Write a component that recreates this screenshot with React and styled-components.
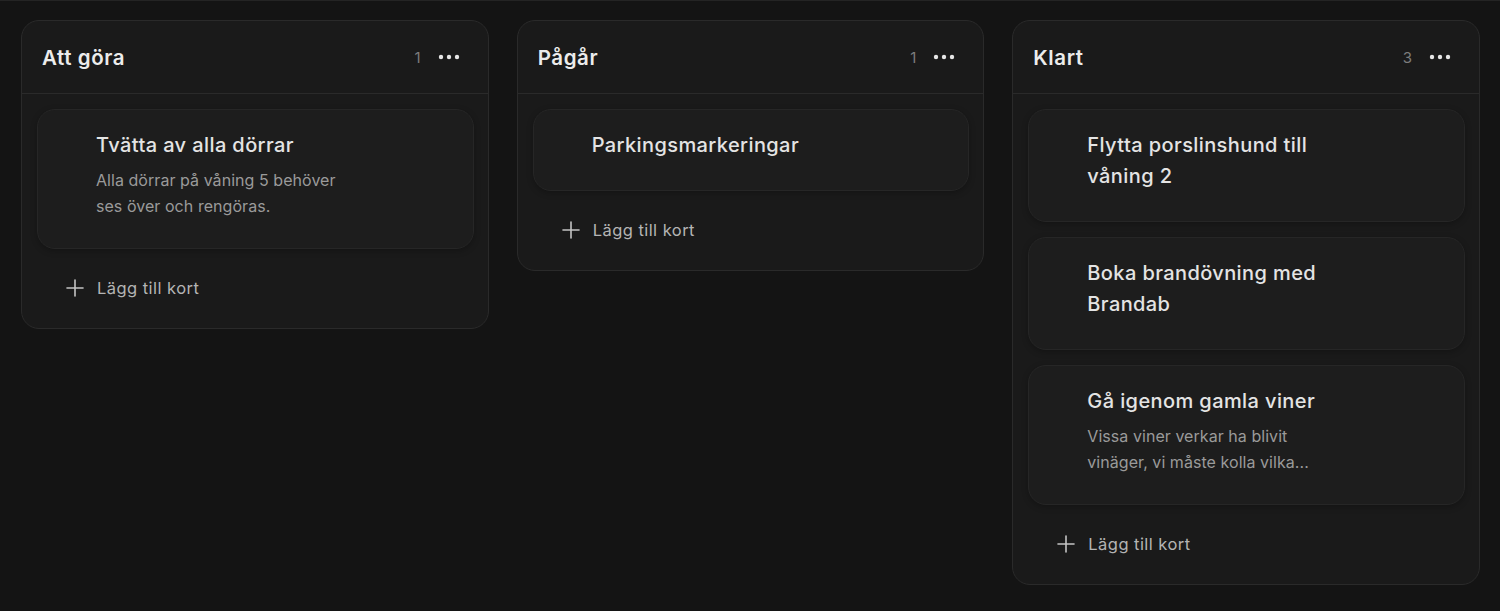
import styled, { createGlobalStyle } from 'styled-components';

const GlobalStyle = createGlobalStyle`
  html, body {
    margin: 0;
    padding: 0;
    background: #141414;
  }
  body {
    font-family: Inter, "Noto Sans", sans-serif;
    -webkit-font-smoothing: antialiased;
  }
`;

const columns = [
  {
    title: 'Att göra',
    cards: [
      {
        title: 'Tvätta av alla dörrar',
        text: 'Alla dörrar på våning 5 behöver ses över och rengöras.',
      },
    ],
  },
  {
    title: 'Pågår',
    cards: [{ title: 'Parkingsmarkeringar' }],
  },
  {
    title: 'Klart',
    cards: [
      { title: 'Flytta porslinshund till våning 2' },
      { title: 'Boka brandövning med Brandab' },
      {
        title: 'Gå igenom gamla viner',
        text: 'Vissa viner verkar ha blivit vinäger, vi måste kolla vilka...',
      },
    ],
  },
];

const Board = styled.div`
  border-top: 1px solid #242424;
  min-height: 610px;
  box-sizing: border-box;
  padding: 19px 20px 20px 21px;
  display: grid;
  grid-template-columns: repeat(3, 1fr);
  gap: 28px;
  align-items: start;
`;

const Column = styled.section`
  background: #1a1a1a;
  border: 1px solid #2a2a2a;
  border-radius: 18px;
  overflow: hidden;
`;

const Header = styled.header`
  height: 73px;
  box-sizing: border-box;
  display: flex;
  align-items: center;
  padding: 0 28px 0 20px;
  border-bottom: 1px solid #2a2a2a;
`;

const Title = styled.h2`
  margin: 0;
  flex: 1;
  font-size: 20.5px;
  font-weight: 600;
  color: #ececec;
  letter-spacing: 0.6px;
`;

const Count = styled.span`
  font-size: 15px;
  color: #7d7d7d;
  margin-right: 17px;
`;

const MenuButton = styled.button`
  border: 0;
  padding: 0;
  background: none;
  display: flex;
  color: #e6e6e6;
`;

const Body = styled.div`
  display: flex;
  flex-direction: column;
  gap: 15px;
  padding: 15px 14px 16px 15px;
`;

const Card = styled.article`
  background: #1d1d1d;
  border: 1px solid #262626;
  border-radius: 18px;
  padding: 20px 20px 29px 58px;
  box-shadow: 0 2px 6px rgba(0, 0, 0, 0.25);
`;

const CardTitle = styled.h3`
  margin: 0;
  max-width: 265px;
  font-size: 20px;
  line-height: 31px;
  font-weight: 500;
  letter-spacing: 0.4px;
  color: #e4e4e4;
`;

const CardText = styled.p`
  margin: 6px 0 0;
  max-width: 265px;
  font-size: 16px;
  line-height: 26px;
  letter-spacing: 0.05px;
  color: #9a9a9a;
`;

const AddButton = styled.button`
  height: 48px;
  border: 0;
  background: none;
  display: flex;
  align-items: center;
  gap: 13px;
  padding: 0 0 0 29px;
  font-family: inherit;
  font-size: 16.5px;
  letter-spacing: 0.45px;
  color: #b4b4b4;
  text-align: left;
`;

const Dots = () => (
  <svg width="22" height="22" viewBox="0 0 22 22" fill="currentColor">
    <circle cx="3" cy="11" r="2.2" />
    <circle cx="11" cy="11" r="2.2" />
    <circle cx="19" cy="11" r="2.2" />
  </svg>
);

const Plus = () => (
  <svg width="18" height="18" viewBox="0 0 18 18" stroke="#c4c4c4" strokeWidth="1.6" strokeLinecap="round">
    <line x1="9" y1="1" x2="9" y2="17" />
    <line x1="1" y1="9" x2="17" y2="9" />
  </svg>
);

export default function App() {
  return (
    <>
      <GlobalStyle />
      <Board>
        {columns.map((col) => (
          <Column key={col.title}>
            <Header>
              <Title>{col.title}</Title>
              <Count>{col.cards.length}</Count>
              <MenuButton>
                <Dots />
              </MenuButton>
            </Header>
            <Body>
              {col.cards.map((card) => (
                <Card key={card.title}>
                  <CardTitle>{card.title}</CardTitle>
                  {card.text && <CardText>{card.text}</CardText>}
                </Card>
              ))}
              <AddButton>
                <Plus />
                Lägg till kort
              </AddButton>
            </Body>
          </Column>
        ))}
      </Board>
    </>
  );
}
